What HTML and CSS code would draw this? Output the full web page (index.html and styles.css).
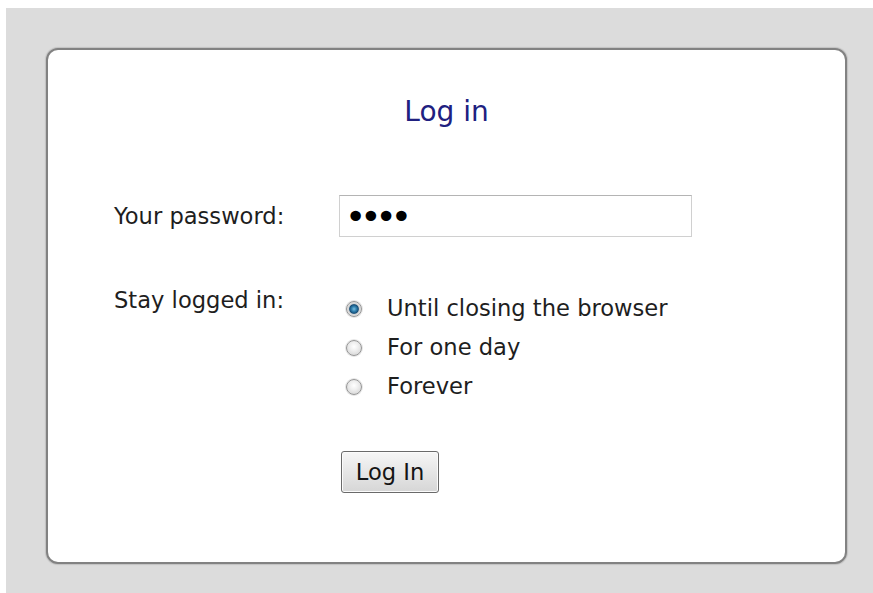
FILE: index.html
```html
<!DOCTYPE html>
<html lang="en">
<head>
<meta charset="utf-8">
<title>Log in</title>
<link rel="stylesheet" href="styles.css">
</head>
<body>
<div class="page">
  <form class="card" action="#" method="post">
    <h1 class="title">Log in</h1>
    <div class="row row-password">
      <label class="label" for="pw">Your password:</label>
      <input class="field" id="pw" type="password" value="abcd">
    </div>
    <div class="row row-stay">
      <span class="label">Stay logged in:</span>
      <div class="choices">
        <label class="choice"><input class="radio" type="radio" name="stay" checked><span>Until closing the browser</span></label>
        <label class="choice"><input class="radio" type="radio" name="stay"><span>For one day</span></label>
        <label class="choice"><input class="radio" type="radio" name="stay"><span>Forever</span></label>
      </div>
    </div>
    <div class="row row-submit">
      <span></span>
      <button class="btn" type="submit">Log In</button>
    </div>
  </form>
</div>
</body>
</html>
```
FILE: styles.css
```css
html, body {
  margin: 0;
  height: 100%;
  background: #ffffff;
}

body {
  font-family: "DejaVu Sans", Verdana, sans-serif;
  color: #1e1e1e;
  overflow: hidden;
}

.page {
  margin: 8px 0 0 6px;
  height: calc(100% - 8px);
  background: #dcdcdc;
  padding: 40px 0 0 40px;
  box-sizing: border-box;
}

.card {
  box-sizing: border-box;
  width: 801px;
  height: 516px;
  background: #ffffff;
  border: 2px solid #828282;
  border-radius: 12px;
  box-shadow: 0 0 1px 1px rgba(0, 0, 0, 0.12);
  padding: 46px 0 0 66px;
}

.title {
  margin: 0 0 67px -66px;
  text-align: center;
  font-weight: normal;
  font-size: 28px;
  line-height: 32px;
  color: #202080;
}

.row {
  display: grid;
  grid-template-columns: 225px 1fr;
}

.label {
  font-size: 22.6px;
  line-height: 26px;
}

.row-password {
  align-items: center;
  height: 42px;
}

.field {
  box-sizing: border-box;
  width: 353px;
  height: 42px;
  margin: 0;
  padding: 0 0 0 5px;
  border: 1px solid #d0d0d0;
  border-top-color: #b4b4b4;
  background: #ffffff;
  font-family: "DejaVu Sans", sans-serif;
  font-size: 36px;
  letter-spacing: -6px;
  color: #000000;
  outline: none;
}

.row-stay {
  margin-top: 50px;
  align-items: start;
}

.choices {
  padding-top: 2px;
  display: flex;
  flex-direction: column;
}

.choice {
  display: flex;
  align-items: center;
  height: 39px;
  font-size: 22.6px;
  line-height: 39px;
}

.radio {
  appearance: none;
  -webkit-appearance: none;
  box-sizing: border-box;
  flex: none;
  width: 16px;
  height: 16px;
  margin: 0 25px 0 7px;
  border-radius: 50%;
  border: 1px solid #969696;
  background: radial-gradient(circle at 50% 40%, #ffffff 0%, #eeeeee 40%, #cdcdcd 100%);
  box-shadow: 0 0 0 1px #e6e6e6;
}

.radio:checked {
  background: radial-gradient(circle at 50% 50%, #7cc0e0 0%, #2f7fae 25%, #174f78 44%, #d4d4d4 54%, #f4f4f4 100%);
}

.row-submit {
  margin-top: 45px;
}

.btn {
  box-sizing: border-box;
  width: 98px;
  height: 42px;
  margin: 0 0 0 2px;
  padding: 0;
  border: 1px solid #6a6a6a;
  border-radius: 3px;
  background: linear-gradient(#f6f6f6, #e6e6e6 50%, #d6d6d6);
  box-shadow: inset 0 0 0 1px #fbfbfb;
  font-family: "DejaVu Sans", sans-serif;
  font-size: 22.6px;
  color: #141414;
}
```
